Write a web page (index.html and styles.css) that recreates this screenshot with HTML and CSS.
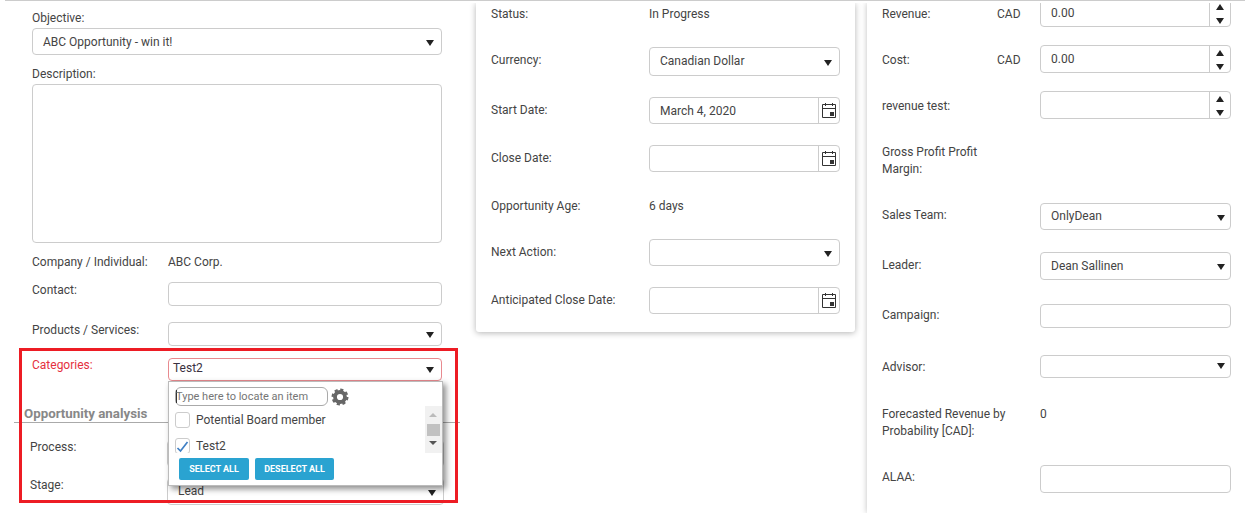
FILE: index.html
```html
<!DOCTYPE html>
<html lang="en">
<head>
<meta charset="utf-8">
<title>Opportunity</title>
<link rel="stylesheet" href="styles.css">
</head>
<body>
<div class="topline"></div>
<main class="page">
  <section class="left">
    <div class="stack">
      <div class="lbl lbl-objective">Objective:</div>
      <div class="ctl ctl-select ctl-obj w410 h27"><span>ABC Opportunity - win it!</span><i class="caret"></i></div>
      <div class="lbl lbl-desc">Description:</div>
      <div class="textarea"></div>
      <div class="grid-left">
        <div class="row"><div class="lbl lbl-col lh24">Company / Individual:</div><div class="value lh24">ABC Corp.</div></div>
        <div class="row"><div class="lbl lbl-col">Contact:</div><div class="ctl w274 h24"></div></div>
        <div class="row"><div class="lbl lbl-col">Products / Services:</div><div class="ctl ctl-select w274 h24"><span></span><i class="caret"></i></div></div>
        <div class="row">
          <div class="lbl lbl-col lbl-red">Categories:</div>
          <div class="field-anchor">
            <div class="ctl ctl-select w274 h23 ctl-err"><span class="tight">Test2</span><i class="caret"></i></div>
            <div class="popup">
              <div class="search-row">
                <div class="search"><span class="cursor"></span>Type here to locate an item</div>
                <svg class="gear" width="18" height="18" viewBox="0 0 18 18" aria-hidden="true">
                  <circle cx="9" cy="9" r="5" fill="none" stroke="#666" stroke-width="3.8"/>
                  <circle cx="9" cy="9" r="7.4" fill="none" stroke="#666" stroke-width="2.200" stroke-dasharray="3.200 2.610"/>
                </svg>
              </div>
              <div class="list-wrap">
                <div class="list">
                  <div class="item"><span class="box"></span><span>Potential Board member</span></div>
                  <div class="item"><span class="box"><svg width="15" height="16" viewBox="0 0 15 16" aria-hidden="true"><path d="M2.500 10l3 3 7-9" fill="none" stroke="#3f7fc4" stroke-width="1.700"/></svg></span><span>Test2</span></div>
                </div>
                <div class="scrollbar"><i class="sb-up"></i><i class="sb-thumb"></i><i class="sb-down"></i></div>
              </div>
              <div class="btns"><button class="btn btn-a" type="button">SELECT ALL</button><button class="btn btn-b" type="button">DESELECT ALL</button></div>
            </div>
          </div>
        </div>
      </div>
    </div>
    <div class="analysis">
      <h2 class="heading">Opportunity analysis</h2>
      <div class="arow arow-process"><div class="lbl alab">Process:</div><div class="ctl ctl-select w277 h27"><span></span><i class="caret"></i></div></div>
      <div class="arow arow-stage"><div class="lbl alab">Stage:</div><div class="ctl ctl-select w277 h27"><span>Lead</span><i class="caret"></i></div></div>
    </div>
  </section>

  <section class="card">
    <div class="row"><div class="lbl mlab">Status:</div><div class="value lh26">In Progress</div></div>
    <div class="row"><div class="lbl mlab">Currency:</div><div class="ctl ctl-select w191 h29"><span>Canadian Dollar</span><i class="caret"></i></div></div>
    <div class="row"><div class="lbl mlab">Start Date:</div>
      <div class="ctl w191 h27 ctl-date"><span>March 4, 2020</span><b class="cal"><svg width="14" height="15" viewBox="0 0 14 15" aria-hidden="true"><path d="M.5 1.500h13v13H.5zM.5 5.500h13M3.500 0v3M10.500 0v3" fill="none" stroke="#333"/><rect x="8" y="9" width="4" height="4" fill="#333"/></svg></b></div></div>
    <div class="row"><div class="lbl mlab">Close Date:</div>
      <div class="ctl w191 h27 ctl-date"><span></span><b class="cal"><svg width="14" height="15" viewBox="0 0 14 15" aria-hidden="true"><path d="M.5 1.500h13v13H.5zM.5 5.500h13M3.500 0v3M10.500 0v3" fill="none" stroke="#333"/><rect x="8" y="9" width="4" height="4" fill="#333"/></svg></b></div></div>
    <div class="row"><div class="lbl mlab">Opportunity Age:</div><div class="value lh26">6 days</div></div>
    <div class="row"><div class="lbl mlab">Next Action:</div><div class="ctl ctl-select w191 h27"><span></span><i class="caret"></i></div></div>
    <div class="row"><div class="lbl mlab">Anticipated Close Date:</div>
      <div class="ctl w191 h27 ctl-date"><span></span><b class="cal"><svg width="14" height="15" viewBox="0 0 14 15" aria-hidden="true"><path d="M.5 1.500h13v13H.5zM.5 5.500h13M3.500 0v3M10.500 0v3" fill="none" stroke="#333"/><rect x="8" y="9" width="4" height="4" fill="#333"/></svg></b></div></div>
  </section>

  <section class="right">
    <div class="right-grid">
      <div class="row"><div class="lbl rlab lh30">Revenue:</div><div class="cur lh30">CAD</div><div class="ctl w191 h28 ctl-num"><span>0.00</span><b class="spin"><i class="up"></i><i class="down"></i></b></div></div>
      <div class="row"><div class="lbl rlab lh30">Cost:</div><div class="cur lh30">CAD</div><div class="ctl w191 h28 ctl-num"><span>0.00</span><b class="spin"><i class="up"></i><i class="down"></i></b></div></div>
      <div class="row"><div class="lbl rlab lh30">revenue test:</div><div class="cur"></div><div class="ctl w191 h28 ctl-num"><span></span><b class="spin"><i class="up"></i><i class="down"></i></b></div></div>
      <div class="row"><div class="lbl rlab lh17 nudge">Gross Profit Profit Margin:</div></div>
      <div class="row"><div class="lbl rlab rfull">Sales Team:</div><div class="ctl ctl-select w191 h27"><span>OnlyDean</span><i class="caret"></i></div></div>
      <div class="row"><div class="lbl rlab rfull lh26">Leader:</div><div class="ctl ctl-select w191 h28"><span>Dean Sallinen</span><i class="caret"></i></div></div>
      <div class="row"><div class="lbl rlab rfull lh22">Campaign:</div><div class="ctl w191 h24"></div></div>
      <div class="row"><div class="lbl rlab rfull">Advisor:</div><div class="ctl ctl-select w191 h23 ctl-adv"><span></span><i class="caret"></i></div></div>
      <div class="row"><div class="lbl rlab rfull lh17 nudge">Forecasted Revenue by Probability [CAD]:</div><div class="value lh17 nudge">0</div></div>
      <div class="row"><div class="lbl rlab rfull">ALAA:</div><div class="ctl w191 h28"></div></div>
    </div>
  </section>
</main>
<div class="callout"></div>
</body>
</html>
```
FILE: styles.css
```css
* { box-sizing: border-box; }
html, body { margin: 0; padding: 0; }
body {
  width: 1245px;
  height: 513px;
  overflow: hidden;
  position: relative;
  background: #fff;
  font: 12px/16px Roboto, "Liberation Sans", sans-serif;
  color: #444;
}
.topline {
  position: relative;
  z-index: 3;
  height: 3px;
  margin-left: 5px;
  background: #fff;
  border-top: 1px solid #ccc;
}
.page { display: flex; align-items: flex-start; height: 510px; }

/* generic */
.row { display: flex; align-items: flex-start; }
.lbl, .value { color: #444; }
.lh24 { line-height: 24px; }
.lh26 { line-height: 26px; }
.lh30 { line-height: 30px; }
.lh17 { line-height: 17px; }
.nudge { margin-top: 1px; }
.ctl {
  display: flex;
  align-items: center;
  justify-content: space-between;
  flex: none;
  border: 1px solid #ccc;
  border-radius: 4px;
  background: #fff;
  padding-left: 10px;
  color: #444;
}
.ctl-select { padding-right: 7px; }
.ctl-select > span { margin-top: -1px; }
.ctl-obj > span { margin-top: 0; }
.caret {
  flex: none;
  width: 0;
  height: 0;
  margin-top: 2px;
  border-left: 4px solid transparent;
  border-right: 4px solid transparent;
  border-top: 6px solid #222;
}
.h23 { height: 23px; }
.h24 { height: 24px; }
.h27 { height: 27px; }
.h28 { height: 28px; }
.h29 { height: 29px; }
.w191 { width: 191px; }
.w274 { width: 274px; }
.w277 { width: 277px; }
.w410 { width: 410px; }

/* left column */
.left { flex: none; width: 446px; margin-left: 14px; height: 510px; }
.stack { padding-left: 18px; }
.lbl-objective { padding-top: 7px; height: 25px; }
.lbl-desc { margin-top: 11px; height: 18px; }
.textarea {
  width: 410px;
  height: 159px;
  border: 1px solid #ccc;
  border-radius: 4px;
}
.grid-left {
  display: grid;
  grid-template-rows: 32px 40px 36px 23px;
  margin-top: 7px;
}
.lbl-col { width: 136px; flex: none; }
.lbl-red { color: #e5303e; margin-top: -1px; }
.ctl-err { border-color: #e88a8f; padding-left: 4px; }
.ctl-err > span { margin-top: -3px; }
.ctl-err .caret { margin-top: 0; }
.tight { color: #3a3140; }
.field-anchor { position: relative; }

/* popup */
.popup {
  position: absolute;
  z-index: 2;
  left: 0;
  top: 23px;
  width: 275px;
  height: 105px;
  padding: 5px 0 0 6px;
  background: #fff;
  border: 1px solid #bbb;
  box-shadow: 3px 3px 6px rgba(0,0,0,.45);
}
.search-row { display: flex; align-items: center; gap: 3px; }
.search {
  display: flex;
  align-items: center;
  width: 153px;
  height: 19px;
  border: 1px solid #aaa;
  border-radius: 6px;
  font-size: 11px;
  color: #757575;
  white-space: nowrap;
}
.cursor { width: 1px; height: 13px; background: #333; margin-right: -1px; }
.gear { flex: none; }
.list-wrap {
  display: flex;
  justify-content: space-between;
  height: 47px;
  margin-left: -6px;
  padding-left: 6px;
  overflow: hidden;
}
.list { padding-top: 6px; }
.item {
  display: flex;
  align-items: flex-start;
  gap: 6px;
  height: 26px;
  color: #444;
  line-height: 16px;
}
.box {
  flex: none;
  width: 15px;
  height: 16px;
  border: 1px solid #ccc;
  border-radius: 3px;
  background: #fff;
}
.box svg { display: block; margin: -1px 0 0 -1px; }
.scrollbar {
  position: relative;
  flex: none;
  width: 17px;
  height: 47px;
  background: #f1f1f1;
}
.sb-thumb {
  position: absolute;
  left: 2px;
  top: 18px;
  width: 13px;
  height: 12px;
  background: #c1c1c1;
}
.sb-up, .sb-down {
  position: absolute;
  left: 4px;
  width: 0;
  height: 0;
  border-left: 4px solid transparent;
  border-right: 4px solid transparent;
}
.sb-up { top: 7px; border-bottom: 4px solid #bbb; }
.sb-down { top: 35px; border-top: 4px solid #555; }
.btns { display: flex; gap: 6px; margin: 5px 0 0 4px; }
.btn {
  height: 22px;
  padding: 0;
  border: 0;
  border-radius: 2px;
  background: #2aa3d1;
  color: #fff;
  font: 700 9px/22px Roboto, "Liberation Sans", sans-serif;
  white-space: nowrap;
}
.btn-a { width: 70px; }
.btn-b { width: 79px; }

/* analysis */
.heading {
  margin: 0;
  height: 42px;
  padding: 25px 0 0 10px;
  border-bottom: 1px solid #aaa;
  font: 700 13.300px/16px Roboto, "Liberation Sans", sans-serif;
  color: #888;
}
.arow { display: flex; align-items: flex-start; padding-left: 16px; }
.arow-process { margin-top: 17px; }
.arow-stage { margin-top: 11px; }
.alab { width: 137px; flex: none; margin-top: -1px; }

/* centre card */
.card {
  flex: none;
  display: grid;
  grid-template-rows: 44px 50px 48px 48px 46px 48px 27px;
  width: 379px;
  height: 329px;
  margin-left: 16px;
  padding-left: 15px;
  background: #fff;
  box-shadow: 0 1px 6px rgba(0,0,0,.3);
  border-radius: 0 0 3px 3px;
}
.mlab { width: 158px; flex: none; line-height: 26px; }
.card > .row:first-child .mlab, .card > .row:first-child .value { margin-top: -2px; }
.ctl-date { padding-right: 0; }
.cal {
  display: flex;
  align-items: center;
  justify-content: center;
  align-self: stretch;
  flex: none;
  width: 21px;
  border-left: 1px solid #ccc;
}

/* right column */
.right {
  flex: none;
  width: 378px;
  height: 510px;
  margin-left: 12px;
  overflow: hidden;
  box-shadow: 0 0 6px rgba(0,0,0,.25);
  background: #fff;
  clip-path: inset(0 0 0 -8px);
}
.right-grid {
  display: grid;
  grid-template-rows: 46px 46px 52px 60px 49px 52px 51px 50px 60px 28px;
  margin-top: -4px;
  padding-left: 15px;
}
.rlab { width: 115px; flex: none; line-height: 24px; }
.rlab.lh30 { line-height: 30px; }
.rlab.lh17 { line-height: 17px; }
.rlab.lh26 { line-height: 26px; }
.rlab.lh22 { line-height: 22px; }
.rfull { width: 158px; }
.rfull.lh17 { padding-right: 20px; }
.cur { width: 43px; flex: none; }
.right .ctl-select { padding-right: 5px; }
.ctl-num { padding-right: 0; }
.spin {
  display: flex;
  flex-direction: column;
  align-items: center;
  gap: 8px;
  align-self: stretch;
  flex: none;
  width: 21px;
  padding-top: 4px;
  border-left: 1px solid #ccc;
}
.up, .down { width: 0; height: 0; border-left: 4px solid transparent; border-right: 4px solid transparent; }
.up { border-bottom: 6px solid #222; }
.down { border-top: 6px solid #222; }
.ctl-adv .caret { margin-top: -2px; }

/* annotation */
.callout {
  position: absolute;
  z-index: 4;
  left: 19px;
  top: 348px;
  width: 439px;
  height: 155px;
  border: 3px solid #ed1c24;
  pointer-events: none;
}
```
